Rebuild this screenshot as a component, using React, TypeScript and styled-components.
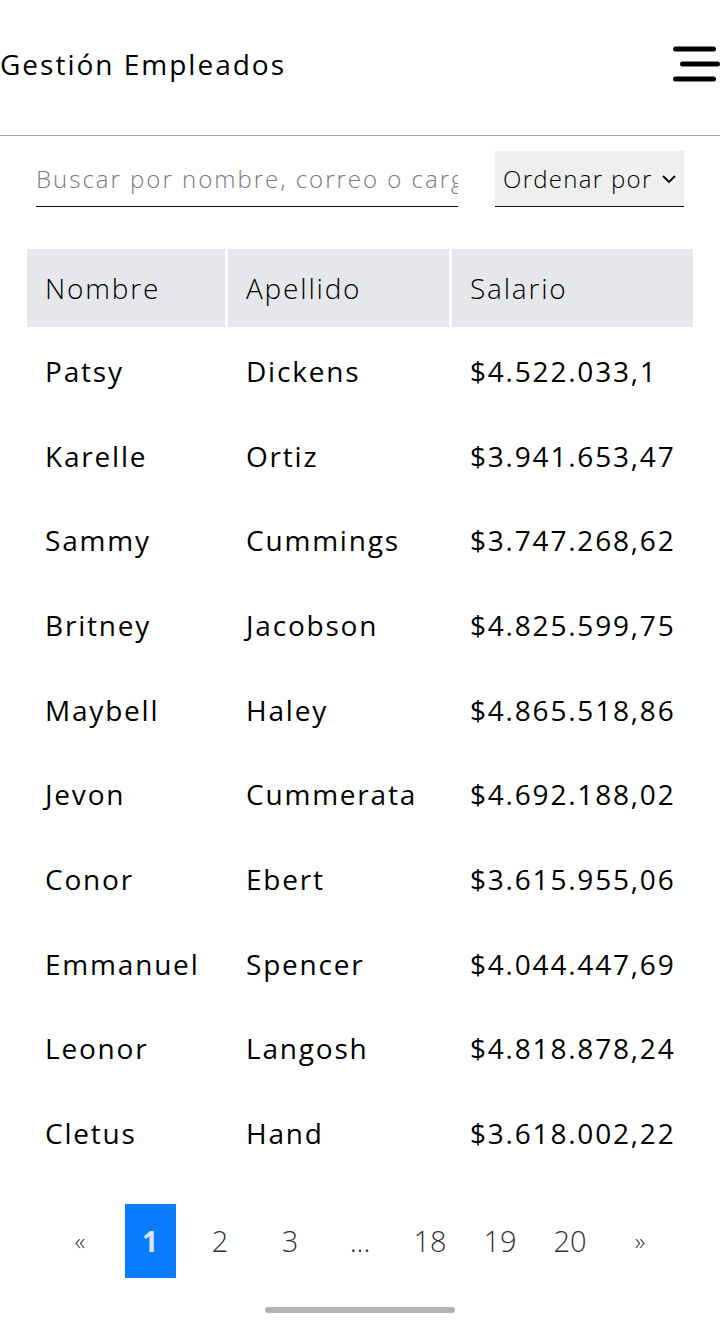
import React from "react";
import styled, { createGlobalStyle } from "styled-components";

const GlobalStyle = createGlobalStyle`
  html, body { margin: 0; padding: 0; background: #ffffff; }
  body { font-family: "Open Sans", "Noto Sans", sans-serif; color: #000; }
  * { box-sizing: border-box; }
`;

const Page = styled.div`
  width: 720px;
  min-height: 1325px;
  display: flex;
  flex-direction: column;
`;

const Header = styled.header`
  height: 136px;
  padding-bottom: 8px;
  display: flex;
  align-items: center;
  justify-content: space-between;
  border-bottom: 1px solid #a3a3a3;
`;

const Title = styled.h1`
  margin: 0;
  font-size: 28px;
  font-weight: 500;
  letter-spacing: 2px;
`;

const MenuButton = styled.button`
  width: 48px;
  height: 40px;
  padding: 0;
  border: none;
  background: none;
  display: flex;
  align-items: center;
  justify-content: flex-end;
`;

const Toolbar = styled.div`
  display: flex;
  align-items: stretch;
  gap: 37px;
  padding: 15px 36px 0 36px;
`;

const SearchInput = styled.input`
  flex: 1;
  min-width: 0;
  height: 56px;
  border: none;
  border-bottom: 1.5px solid #111;
  padding: 0;
  font-family: inherit;
  font-size: 24px;
  font-weight: 300;
  letter-spacing: 2px;
  outline: none;
  background: transparent;
  &::placeholder { color: #7a7a7a; }
`;

const SortSelect = styled.div`
  width: 189px;
  height: 56px;
  background: #efefef;
  border-bottom: 1.5px solid #111;
  display: flex;
  align-items: center;
  justify-content: space-between;
  padding: 0 7px 0 8px;
  font-size: 24px;
  font-weight: 300;
  letter-spacing: 1.3px;
`;

const Table = styled.table`
  margin: 39px 24px 0 24px;
  width: 672px;
  border-spacing: 3px;
  table-layout: fixed;
`;

const HeadCell = styled.th<{ $w: number }>`
  width: ${(p) => p.$w}px;
  height: 78px;
  background: #e5e7eb;
  text-align: left;
  padding: 0 0 0 18px;
  font-size: 28px;
  font-weight: 300;
  letter-spacing: 1.8px;
`;

const Cell = styled.td`
  height: 81.7px;
  padding: 0 0 0 18px;
  font-size: 28px;
  font-weight: 400;
  letter-spacing: 1.8px;
  white-space: nowrap;
`;

const Pagination = styled.nav`
  margin-top: 27px;
  display: flex;
  justify-content: center;
  gap: 19px;
`;

const PageItem = styled.div<{ $active?: boolean }>`
  width: 51px;
  height: 74px;
  display: flex;
  align-items: center;
  justify-content: center;
  font-size: ${(p) => (p.$active ? "28px" : "29px")};
  font-weight: ${(p) => (p.$active ? 700 : 300)};
  color: ${(p) => (p.$active ? "#dbe4f0" : "#333")};
  background: ${(p) => (p.$active ? "#0a7cff" : "transparent")};
`;

const Arrow = styled(PageItem)`
  font-size: 24px;
`;

const ScrollHint = styled.div`
  margin: 29px auto 0;
  width: 190px;
  height: 6px;
  border-radius: 3px;
  background: #b3b3b3;
`;

const rows = [
  ["Patsy", "Dickens", "$4.522.033,1"],
  ["Karelle", "Ortiz", "$3.941.653,47"],
  ["Sammy", "Cummings", "$3.747.268,62"],
  ["Britney", "Jacobson", "$4.825.599,75"],
  ["Maybell", "Haley", "$4.865.518,86"],
  ["Jevon", "Cummerata", "$4.692.188,02"],
  ["Conor", "Ebert", "$3.615.955,06"],
  ["Emmanuel", "Spencer", "$4.044.447,69"],
  ["Leonor", "Langosh", "$4.818.878,24"],
  ["Cletus", "Hand", "$3.618.002,22"],
];

const pages = ["1", "2", "3", "...", "18", "19", "20"];

export default function App() {
  return (
    <>
      <GlobalStyle />
      <Page>
        <Header>
          <Title>Gestión Empleados</Title>
          <MenuButton aria-label="menu">
            <svg width="48" height="40" viewBox="0 0 48 40">
              <g stroke="#000" strokeWidth="5" strokeLinecap="round">
                <line x1="3.5" y1="5" x2="41.5" y2="5" />
                <line x1="10.5" y1="20" x2="45.5" y2="20" />
                <line x1="3.5" y1="35" x2="41.5" y2="35" />
              </g>
            </svg>
          </MenuButton>
        </Header>
        <Toolbar>
          <SearchInput placeholder="Buscar por nombre, correo o cargo" />
          <SortSelect>
            <span>Ordenar por</span>
            <svg width="16" height="10" viewBox="0 0 16 10">
              <path d="M2 2 L8 8 L14 2" fill="none" stroke="#000" strokeWidth="1.8" />
            </svg>
          </SortSelect>
        </Toolbar>
        <Table>
          <thead>
            <tr>
              <HeadCell $w={198}>Nombre</HeadCell>
              <HeadCell $w={221}>Apellido</HeadCell>
              <HeadCell $w={241}>Salario</HeadCell>
            </tr>
          </thead>
          <tbody>
            {rows.map((r) => (
              <tr key={r[0]}>
                <Cell>{r[0]}</Cell>
                <Cell>{r[1]}</Cell>
                <Cell>{r[2]}</Cell>
              </tr>
            ))}
          </tbody>
        </Table>
        <Pagination>
          <Arrow>«</Arrow>
          {pages.map((p, i) => (
            <PageItem key={i} $active={i === 0}>
              {p}
            </PageItem>
          ))}
          <Arrow>»</Arrow>
        </Pagination>
        <ScrollHint />
      </Page>
    </>
  );
}
